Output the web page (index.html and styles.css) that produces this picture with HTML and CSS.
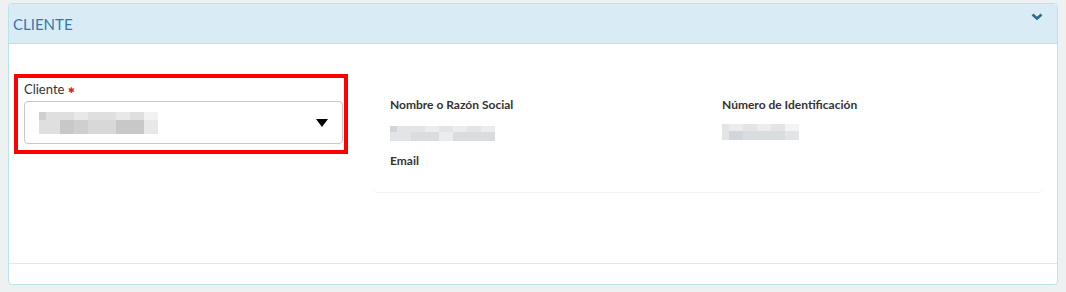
FILE: index.html
```html
<!DOCTYPE html>
<html lang="es">
<head>
    <meta charset="UTF-8">
    <title>Cliente</title>
    <link rel="stylesheet" href="styles.css">
</head>
<body>
    <div class="panel">
        <div class="panel-heading">
            <span class="panel-title">CLIENTE</span>
            <svg class="chevron" width="12" height="8" viewBox="0 0 12 8">
                <polyline points="1.5,1.5 6,5.5 10.5,1.5" fill="none" stroke="#2d6a8c" stroke-width="2.6"/>
            </svg>
        </div>
        <div class="panel-body">
            <div class="form-group highlight">
                <label class="field-label">Cliente <span class="required">&#x2731;</span></label>
                <div class="select-box">
                    <div class="blur sel">
                        <div class="blur-row r1">
                            <span class="w7 g4"></span><span class="g2"></span><span class="g2"></span><span class="g1"></span><span class="g2"></span><span class="g2"></span><span class="g1"></span><span class="g2"></span><span class="g0"></span>
                        </div>
                        <div class="blur-row r2">
                            <span class="w21 g2"></span><span class="g5"></span><span class="g4"></span><span class="g3"></span><span class="g3"></span><span class="g5"></span><span class="g5"></span><span class="g1"></span>
                        </div>
                    </div>
                    <span class="caret"></span>
                </div>
            </div>
            <div class="info-card">
                <div class="info-item">
                    <div class="info-label">Nombre o Razón Social</div>
                    <div class="blur name">
                        <div class="blur-row r1">
                            <span class="w7 b3"></span><span class="b1"></span><span class="b1"></span><span class="b0"></span><span class="b1"></span><span class="b0"></span><span class="b1"></span><span class="b0"></span>
                        </div>
                        <div class="blur-row r2">
                            <span class="w7 b1"></span><span class="b1"></span><span class="b2"></span><span class="b2"></span><span class="b0"></span><span class="b2"></span><span class="b2"></span><span class="b2"></span>
                        </div>
                    </div>
                </div>
                <div class="info-item">
                    <div class="info-label">Número de Identificación</div>
                    <div class="blur ident">
                        <div class="blur-row r1">
                            <span class="w7 b1"></span><span class="b0"></span><span class="b1"></span><span class="b0"></span><span class="b1"></span><span class="b00"></span>
                        </div>
                        <div class="blur-row r2">
                            <span class="w7 b1"></span><span class="b3"></span><span class="b2"></span><span class="b2"></span><span class="b2"></span><span class="b1"></span>
                        </div>
                    </div>
                </div>
                <div class="info-item">
                    <div class="info-label">Email</div>
                </div>
            </div>
        </div>
        <div class="panel-footer"></div>
    </div>
</body>
</html>
```

FILE: styles.css
```css
body {
    margin: 0;
    padding: 3px 8px 0;
    background: #eef1f2;
    font-family: Lato, "Open Sans", Arial, sans-serif;
    color: #333;
}
.panel {
    width: 1048px;
    background: white;
    border: 1px solid #bce3ea;
    border-radius: 4px;
}
.panel-heading {
    display: flex;
    justify-content: space-between;
    align-items: flex-start;
    height: 39px;
    padding-left: 4px;
    background: #d9ecf6;
    border-bottom: 1px solid #bce3ea;
    border-radius: 3px 3px 0 0;
}
.panel-title {
    font-size: 15px;
    line-height: 18px;
    margin-top: 11px;
    color: #3479ab;
}
.chevron {
    margin: 9px 14px 0 0;
}
.panel-body {
    display: flex;
    align-items: flex-start;
    height: 219px;
    box-sizing: border-box;
    padding: 30px 0 0 5px;
    gap: 26px;
}
.panel-footer {
    height: 20px;
    border-top: 1px solid #e6e6e6;
}
.highlight {
    width: 334px;
    height: 80px;
    box-sizing: border-box;
    border: 4px solid #ff0000;
    padding: 3px 1px 0 6px;
}
.field-label {
    display: block;
    font-size: 13px;
    line-height: 16px;
    color: #333;
    margin-bottom: 3px;
}
.required {
    color: #e02020;
    font-size: 8px;
    vertical-align: 1px;
}
.select-box {
    display: flex;
    align-items: center;
    justify-content: space-between;
    height: 43px;
    box-sizing: border-box;
    border: 1px solid #c8c8c8;
    border-radius: 4px;
    padding: 0 14px 0 14px;
}
.caret {
    width: 0;
    height: 0;
    border-left: 6px solid transparent;
    border-right: 6px solid transparent;
    border-top: 8px solid #000;
    margin-top: 1px;
}
.blur {
    display: flex;
    flex-direction: column;
}
.blur-row {
    display: flex;
}
.blur-row span {
    width: 14px;
}
.blur-row span.w7 {
    width: 7px;
}
.blur-row span.w21 {
    width: 21px;
}
.sel .r1 { height: 8px; }
.sel .r2 { height: 14px; }
.name .r1 { height: 6px; }
.name .r2 { height: 9px; }
.ident .r1 { height: 7px; }
.ident .r2 { height: 9px; }
.name, .ident {
    margin-top: 13px;
}
.ident {
    margin-top: 11px;
}
.g0 { background: #f2f2f2; }
.g1 { background: #e8e8e8; }
.g2 { background: #dfdfdf; }
.g3 { background: #d8d8d8; }
.g4 { background: #cfcfcf; }
.g5 { background: #c8c8c8; }
.b00 { background: #f3f4f5; }
.b0 { background: #eaecee; }
.b1 { background: #e2e4e7; }
.b2 { background: #dadde0; }
.b3 { background: #d2d6da; }
.info-card {
    width: 668px;
    box-sizing: border-box;
    padding: 23px 16px 23px;
    display: grid;
    grid-template-columns: 332px 1fr;
    row-gap: 12px;
    border-radius: 4px;
    box-shadow: 0 1px 1px rgba(0, 0, 0, 0.05);
}
.info-label {
    font-size: 12px;
    line-height: 16px;
    font-weight: bold;
    color: #333;
}
```
